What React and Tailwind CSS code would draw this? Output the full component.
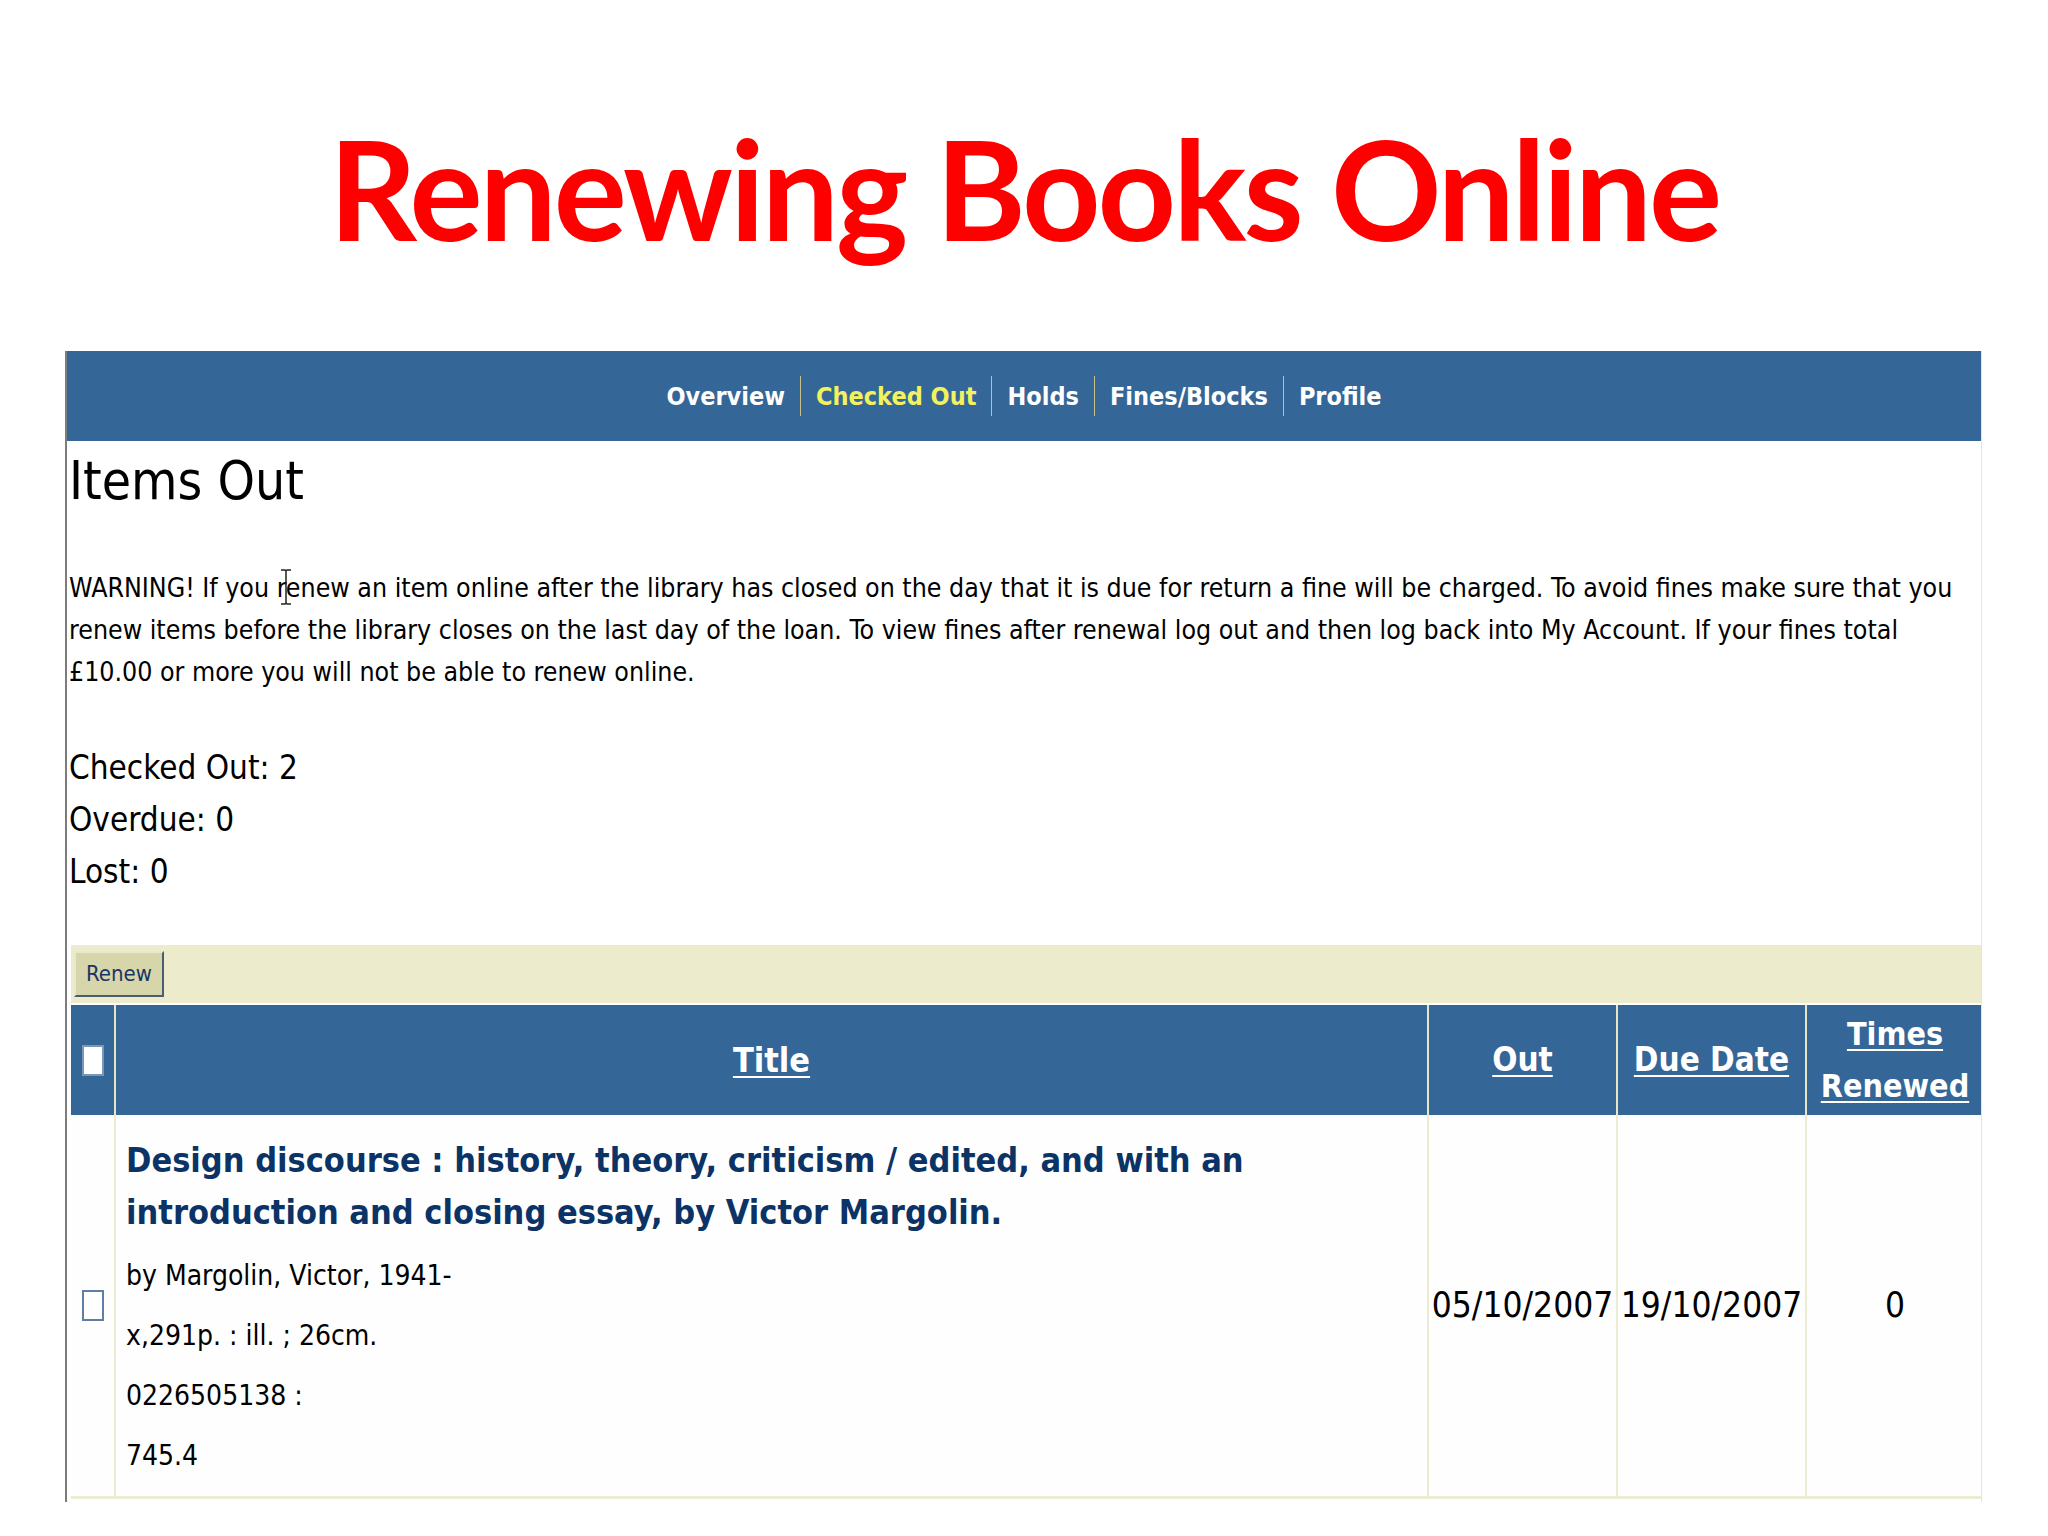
import React from "react";

const narrow = "font-[family-name:'Liberation_Sans_Narrow','DejaVu_Sans_Condensed',sans-serif]";

const navItems = [
  { label: "Overview" },
  { label: "Checked Out", active: true },
  { label: "Holds" },
  { label: "Fines/Blocks" },
  { label: "Profile" },
];

const metaLines = ["by Margolin, Victor, 1941-", "x,291p. : ill. ; 26cm.", "0226505138 :", "745.4"];

function Box({ className }) {
  return <div className={"w-[22px] h-[31px] bg-white border-2 " + className} />;
}

export default function App() {
  return (
    <div className={"relative w-[2048px] h-[1536px] bg-white overflow-hidden " + narrow}>
      {/* slide title */}
      <div className="h-[351px] pt-[120px]">
        <h1 className="text-center text-[137px] leading-none font-bold tracking-[-3px] text-[#ff0000] font-[family-name:Lato,'Open_Sans',sans-serif]">
          Renewing Books Online
        </h1>
      </div>

      {/* screenshot of the account page */}
      <div className="ml-[65px] w-[1917px] h-[1151px] border-l-2 border-l-[#7c7c7c] border-r border-r-[#e4e4e4] overflow-hidden">
        <div className="h-[90px] bg-[#346698] flex items-center justify-center">
          {navItems.map((item, i) => (
            <div key={item.label} className="flex items-center">
              {i > 0 && <span className="w-px h-[40px] bg-[#c8bf8a]" />}
              <span
                className={
                  "px-[15px] text-[25px] font-bold leading-none " +
                  (item.active ? "text-[#f2f25e]" : "text-white")
                }
              >
                {item.label}
              </span>
            </div>
          ))}
        </div>

        <div className="pl-[2px]">
          <h2 className="text-[53px] leading-[80px] text-black">Items Out</h2>

          <p className="mt-[46px] text-[26.5px] leading-[42px] text-black whitespace-nowrap">
            WARNING! If you renew an item online after the library has closed on the day that it is due for return a fine will be charged. To avoid fines make sure that you
            <br />
            renew items before the library closes on the last day of the loan. To view fines after renewal log out and then log back into My Account. If your fines total
            <br />
            £10.00 or more you will not be able to renew online.
          </p>

          <div className="mt-[49px] text-[33px] leading-[52px] text-black">
            <div>Checked Out: 2</div>
            <div>Overdue: 0</div>
            <div>Lost: 0</div>
          </div>

          <div className="mt-[47px] ml-[2px] h-[58px] bg-[#ececcc] flex items-center pl-[3px]">
            <button className="h-[46px] px-[10px] bg-[#d6d6aa] border-2 border-t-[#e8e8cc] border-l-[#e8e8cc] border-r-[#4a5c74] border-b-[#4a5c74] text-[22px] leading-none text-[#1b3466]">
              Renew
            </button>
          </div>

          {/* items table */}
          <div className="ml-[2px] mt-[2px] grid grid-cols-[43px_1313px_189px_189px_178px]">
            <div className="h-[110px] bg-[#346698] flex items-center justify-center">
              <Box className="border-[#7e96b6]" />
            </div>
            <div className="h-[110px] bg-[#346698] border-l-2 border-[#e6e6c4] flex items-center justify-center">
              <span className="text-[34px] leading-[52px] font-bold text-white underline decoration-2 underline-offset-4">Title</span>
            </div>
            <div className="h-[110px] bg-[#346698] border-l-2 border-[#e6e6c4] flex items-center justify-center">
              <span className="text-[33px] leading-[52px] font-bold text-white underline decoration-2 underline-offset-4">Out</span>
            </div>
            <div className="h-[110px] bg-[#346698] border-l-2 border-[#e6e6c4] flex items-center justify-center">
              <span className="text-[33px] leading-[52px] font-bold text-white underline decoration-2 underline-offset-4 whitespace-nowrap">Due Date</span>
            </div>
            <div className="h-[110px] bg-[#346698] border-l-2 border-[#e6e6c4] flex items-center justify-center text-center">
              <span className="text-[32px] leading-[52px] font-bold text-white underline decoration-2 underline-offset-4">
                Times
                <br />
                Renewed
              </span>
            </div>

            <div className="h-[384px] bg-[#fefefe] border-b-[3px] border-[#ececd2] flex items-center justify-center">
              <Box className="border-[#5f7ea6]" />
            </div>
            <div className="h-[384px] bg-[#fefefe] border-l-2 border-b-[3px] border-[#ececd2] pl-[10px] pt-[19px]">
              <div className="text-[34px] leading-[52px] font-bold text-[#0b3366] whitespace-nowrap">
                Design discourse : history, theory, criticism / edited, and with an
                <br />
                introduction and closing essay, by Victor Margolin.
              </div>
              <div className="mt-[8px] text-[28px] leading-[60px] text-black">
                {metaLines.map(line => (
                  <div key={line}>{line}</div>
                ))}
              </div>
            </div>
            <div className="h-[384px] bg-[#fefefe] border-l-2 border-b-[3px] border-[#ececd2] flex items-center justify-center">
              <span className="text-[35px] leading-none text-black">05/10/2007</span>
            </div>
            <div className="h-[384px] bg-[#fefefe] border-l-2 border-b-[3px] border-[#ececd2] flex items-center justify-center">
              <span className="text-[35px] leading-none text-black">19/10/2007</span>
            </div>
            <div className="h-[384px] bg-[#fefefe] border-l-2 border-b-[3px] border-[#ececd2] flex items-center justify-center">
              <span className="text-[35px] leading-none text-black">0</span>
            </div>
          </div>
        </div>
      </div>

      {/* text cursor over the warning */}
      <svg className="absolute left-[279px] top-[569px]" width="14" height="36" viewBox="0 0 14 36">
        <path d="M2 1h4l1 1 1-1h4M7 2v32M2 35h4l1-1 1 1h4" fill="none" stroke="#222" strokeWidth="1.5" />
      </svg>
    </div>
  );
}
